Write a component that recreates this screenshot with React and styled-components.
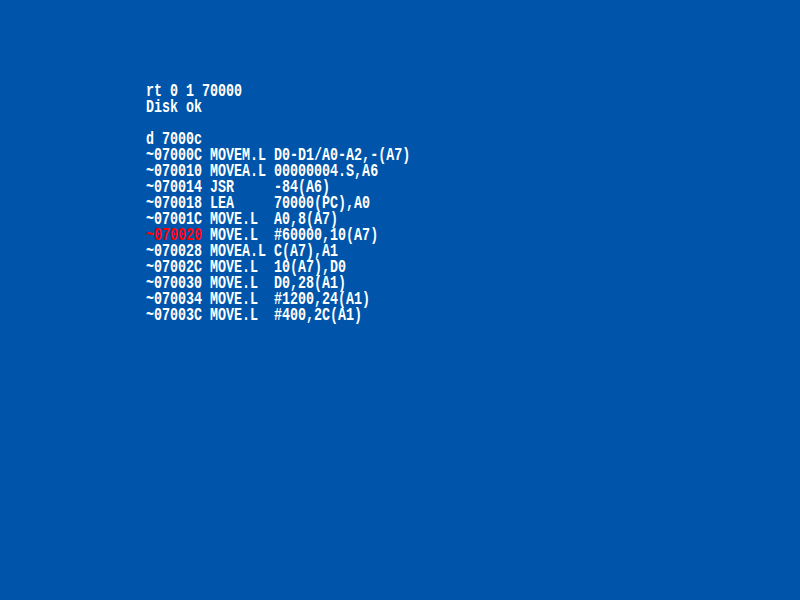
import styled, { createGlobalStyle } from "styled-components";

const GlobalStyle = createGlobalStyle`
  html, body {
    margin: 0;
    padding: 0;
    background: #0055aa;
  }
`;

const Screen = styled.div`
  width: 800px;
  height: 600px;
  background: #0055aa;
  overflow: hidden;
  padding: 83px 0 0 146px;
  box-sizing: border-box;
`;

const Console = styled.div`
  font-family: "Liberation Mono", monospace;
  font-weight: bold;
  font-size: 18px;
  line-height: 16px;
  color: #ffffff;
  white-space: pre;
  transform: scaleX(0.741);
  transform-origin: left top;
`;

const Line = styled.div`
  height: 16px;
`;

const Addr = styled.span`
  color: ${(props) => (props.$hl ? "#ff0000" : "#ffffff")};
`;

const Mnemonic = styled.span`
  display: inline-block;
  width: 8ch;
`;

const listing = [
  ["~07000C", "MOVEM.L", "D0-D1/A0-A2,-(A7)"],
  ["~070010", "MOVEA.L", "00000004.S,A6"],
  ["~070014", "JSR", "-84(A6)"],
  ["~070018", "LEA", "70000(PC),A0"],
  ["~07001C", "MOVE.L", "A0,8(A7)"],
  ["~070020", "MOVE.L", "#60000,10(A7)", true],
  ["~070028", "MOVEA.L", "C(A7),A1"],
  ["~07002C", "MOVE.L", "10(A7),D0"],
  ["~070030", "MOVE.L", "D0,28(A1)"],
  ["~070034", "MOVE.L", "#1200,24(A1)"],
  ["~07003C", "MOVE.L", "#400,2C(A1)"],
];

export default function App() {
  return (
    <>
      <GlobalStyle />
      <Screen>
        <Console>
          <Line>rt 0 1 70000</Line>
          <Line>Disk ok</Line>
          <Line />
          <Line>d 7000c</Line>
          {listing.map(([addr, op, args, hl]) => (
            <Line key={addr}>
              <Addr $hl={hl}>{addr}</Addr> <Mnemonic>{op}</Mnemonic>{args}
            </Line>
          ))}
        </Console>
      </Screen>
    </>
  );
}
